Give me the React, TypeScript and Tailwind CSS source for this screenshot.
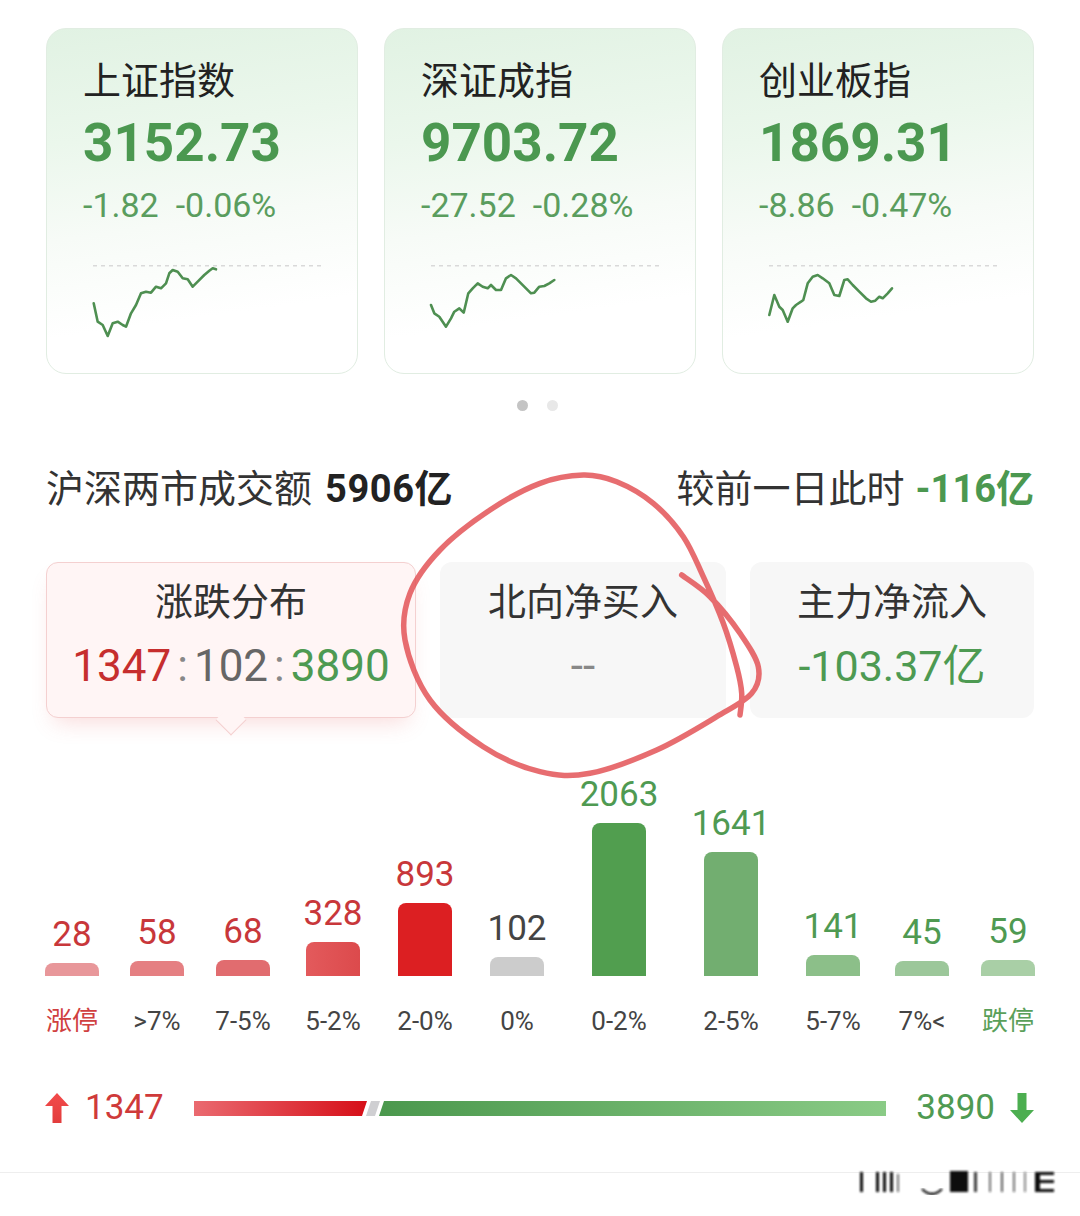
import React from "react";

type Pt = [number, number];

function polyPath(pts: Pt[]) {
  return pts.map((p, i) => `${i ? "L" : "M"}${p[0]},${p[1]}`).join(" ");
}

function smoothPath(pts: Pt[]) {
  let d = `M${pts[0][0]},${pts[0][1]}`;
  for (let i = 0; i < pts.length - 1; i++) {
    const p0 = pts[i - 1] || pts[i];
    const p1 = pts[i];
    const p2 = pts[i + 1];
    const p3 = pts[i + 2] || p2;
    const c1x = p1[0] + (p2[0] - p0[0]) / 6;
    const c1y = p1[1] + (p2[1] - p0[1]) / 6;
    const c2x = p2[0] - (p3[0] - p1[0]) / 6;
    const c2y = p2[1] - (p3[1] - p1[1]) / 6;
    d += ` C${c1x.toFixed(1)},${c1y.toFixed(1)} ${c2x.toFixed(1)},${c2y.toFixed(1)} ${p2[0]},${p2[1]}`;
  }
  return d;
}

const indices: { name: string; value: string; chg: string; pct: string; line: Pt[] }[] = [
  {
    name: "上证指数",
    value: "3152.73",
    chg: "-1.82",
    pct: "-0.06%",
    line: [
      [46.7, 274.3], [50.7, 292.7], [55.7, 296], [60.7, 307], [65.7, 294.3], [70.7, 292.7], [75.7, 296],
      [79, 297.7], [84, 284.3], [89, 276], [94, 264.3], [99, 262.7], [104, 263.7], [109, 257.7],
      [114, 259.3], [119, 254.3], [122.3, 244.3], [125.7, 241], [130.7, 242.7], [135.7, 249.3],
      [140.7, 250.3], [145.7, 257.7], [150.7, 252.7], [157.3, 246], [162.3, 241.7], [165.7, 239.3], [169, 240.3],
    ],
  },
  {
    name: "深证成指",
    value: "9703.72",
    chg: "-27.52",
    pct: "-0.28%",
    line: [
      [46, 276], [49.3, 284.3], [54.3, 287.7], [61, 297.7], [66, 289.3], [69.3, 282.7], [74.3, 279.3],
      [78.7, 283.7], [83.3, 264.3], [87.7, 259.3], [92.7, 254.3], [97.7, 257.7], [102.7, 259.3], [106, 256],
      [111, 261], [116, 261], [121, 249.3], [126, 246], [131, 249.3], [136, 254.3], [141, 259.3],
      [146, 264.3], [149.3, 263.7], [154.3, 257.7], [159.3, 257], [164.3, 254.3], [169.3, 251],
    ],
  },
  {
    name: "创业板指",
    value: "1869.31",
    chg: "-8.86",
    pct: "-0.47%",
    line: [
      [46.3, 286], [51.3, 266], [56.3, 277.7], [59.7, 281], [64.7, 292.7], [69.7, 279.3], [73, 276],
      [78, 272.7], [80.3, 271], [84.7, 254.3], [89.7, 247.7], [94.7, 246], [99.7, 249.3], [106.3, 254.3],
      [111.3, 266], [116.3, 267], [121.3, 251], [124.7, 250.3], [129.7, 256], [136.3, 262.7], [143, 269.3],
      [148, 272.7], [152.3, 271.7], [156.3, 267.7], [159.7, 269.3], [164.7, 264.3], [169, 259.3],
    ],
  },
];

const bars: { v: string; label: string; h: number; ml: string; bar: string; vc: string; lc: string }[] = [
  { v: "28", label: "涨停", h: 13, ml: "ml-0", bar: "bg-[#e8979a]", vc: "text-[#c8373a]", lc: "text-[#d04040]" },
  { v: "58", label: ">7%", h: 15, ml: "ml-[31px]", bar: "bg-[#e57f82]", vc: "text-[#c8373a]", lc: "text-[#444]" },
  { v: "68", label: "7-5%", h: 16, ml: "ml-[32px]", bar: "bg-[#e16c6f]", vc: "text-[#c8373a]", lc: "text-[#444]" },
  { v: "328", label: "5-2%", h: 34, ml: "ml-[36px]", bar: "bg-[linear-gradient(90deg,#e35a5c,#dc4a4c)]", vc: "text-[#c8373a]", lc: "text-[#444]" },
  { v: "893", label: "2-0%", h: 73, ml: "ml-[38px]", bar: "bg-[#dc1f22]", vc: "text-[#c8373a]", lc: "text-[#444]" },
  { v: "102", label: "0%", h: 19, ml: "ml-[38px]", bar: "bg-[#cccccc]", vc: "text-[#444]", lc: "text-[#444]" },
  { v: "2063", label: "0-2%", h: 153, ml: "ml-[48px]", bar: "bg-[#519e4f]", vc: "text-[#4f9a52]", lc: "text-[#444]" },
  { v: "1641", label: "2-5%", h: 124, ml: "ml-[58px]", bar: "bg-[#72ae70]", vc: "text-[#4f9a52]", lc: "text-[#444]" },
  { v: "141", label: "5-7%", h: 21, ml: "ml-[48px]", bar: "bg-[#8cbf89]", vc: "text-[#4f9a52]", lc: "text-[#444]" },
  { v: "45", label: "7%<", h: 15, ml: "ml-[35px]", bar: "bg-[#9cc79a]", vc: "text-[#4f9a52]", lc: "text-[#444]" },
  { v: "59", label: "跌停", h: 16, ml: "ml-[32px]", bar: "bg-[#a9cfa6]", vc: "text-[#4f9a52]", lc: "text-[#5aa05a]" },
];

const circle: Pt[] = [
  [681.7, 575], [710, 596.7], [740, 633.3], [758.3, 666.7], [751.7, 693.3], [716.7, 716.7], [656.7, 750],
  [590, 773.3], [540, 771.7], [483.3, 746.7], [430, 700], [405, 640], [410, 593.3], [440, 550], [490, 510],
  [540, 483.3], [583.3, 475], [616.7, 481.7], [653.3, 503.3], [683.3, 536.7], [703.3, 576.7], [723.3, 623.3],
  [736.7, 666.7], [741.7, 693.3], [740, 715],
];

function IndexCard({ d }: { d: (typeof indices)[number] }) {
  return (
    <div className="relative w-[312px] h-[346px] shrink-0 rounded-[20px] border border-[#e1ede2] bg-[linear-gradient(172deg,#e1f2e3_0%,#ebf7ec_30%,#f7fbf7_55%,#ffffff_80%)] overflow-hidden">
      <div className="ml-[36px] mt-[30px] text-[38px] leading-[44px] text-[#222]">{d.name}</div>
      <div className="ml-[36px] mt-[12px] text-[53px] leading-[56px] font-bold text-[#4b9850]">{d.value}</div>
      <div className="ml-[36px] mt-[14px] text-[34px] leading-[40px] text-[#5a9d5e] flex gap-[17px]">
        <span>{d.chg}</span>
        <span>{d.pct}</span>
      </div>
      <svg className="block" width="312" height="130" viewBox="0 196 312 130">
        <line x1="46" y1="236.7" x2="277" y2="236.7" stroke="#d9d9d9" strokeWidth="1.5" strokeDasharray="4 4" />
        <path d={polyPath(d.line)} fill="none" stroke="#4e8f51" strokeWidth="2.6" strokeLinejoin="round" strokeLinecap="round" />
      </svg>
    </div>
  );
}

export default function App() {
  return (
    <div className="relative w-[1080px] h-[1216px] bg-white overflow-hidden font-['Roboto','Noto_Sans_CJK_SC',sans-serif]">
      {/* index cards */}
      <div className="flex gap-[26px] pt-[28px] px-[46px]">
        {indices.map((d) => (
          <IndexCard key={d.name} d={d} />
        ))}
      </div>

      {/* pager dots */}
      <div className="flex justify-center gap-[19px] mt-[26px] pr-[6px]">
        <div className="w-[11px] h-[11px] rounded-full bg-[#c4c4c4]" />
        <div className="w-[11px] h-[11px] rounded-full bg-[#e8e8e8]" />
      </div>

      {/* turnover summary */}
      <div className="flex justify-between items-center px-[46px] mt-[56px] text-[38px] leading-[44px] text-[#333]">
        <div className="flex items-center">
          <span>沪深两市成交额</span>
          <span className="ml-[13px] font-bold text-[#222] tracking-[0.6px]">5906亿</span>
        </div>
        <div className="flex items-center">
          <span>较前一日此时</span>
          <span className="ml-[11px] font-bold text-[#4b9850]">-116亿</span>
        </div>
      </div>

      {/* stat tabs */}
      <div className="flex gap-[24px] px-[46px] mt-[51px]">
        <div className="relative w-[370px] h-[156px] shrink-0 rounded-[12px] border border-[#f4d0d0] bg-[#fff5f5] shadow-[0_12px_22px_-8px_rgba(230,90,90,0.22)]">
          <div className="absolute left-1/2 -bottom-[14px] w-[22px] h-[22px] -translate-x-1/2 rotate-45 bg-[#fff5f5] border-r border-b border-[#f4d0d0]" />
          <div className="relative flex flex-col items-center">
            <div className="mt-[17px] text-[38px] leading-[44px] text-[#333]">涨跌分布</div>
            <div className="mt-[17px] text-[44px] leading-[50px] flex items-center">
              <span className="text-[#c62e2e]">1347</span>
              <span className="text-[#888] mx-[6px]">:</span>
              <span className="text-[#666]">102</span>
              <span className="text-[#888] mx-[6px]">:</span>
              <span className="text-[#4d9a52]">3890</span>
            </div>
          </div>
        </div>
        <div className="w-[286px] h-[156px] shrink-0 rounded-[12px] bg-[#f7f7f7] flex flex-col items-center">
          <div className="mt-[18px] text-[38px] leading-[44px] text-[#333]">北向净买入</div>
          <div className="mt-[17px] text-[44px] leading-[50px] text-[#888]">--</div>
        </div>
        <div className="flex-1 h-[156px] rounded-[12px] bg-[#f7f7f7] flex flex-col items-center">
          <div className="mt-[18px] text-[38px] leading-[44px] text-[#333]">主力净流入</div>
          <div className="mt-[17px] text-[43px] leading-[50px] text-[#4d9a52]">-103.37亿</div>
        </div>
      </div>

      {/* distribution chart */}
      <div className="flex items-end px-[45px] mt-[57px]">
        {bars.map((b) => (
          <div key={b.label} className={`${b.ml} w-[54px] shrink-0 flex flex-col items-center`}>
            <div className={`${b.vc} text-[35px] leading-[40px] mb-[8px] whitespace-nowrap`}>{b.v}</div>
            <div className={`${b.bar} w-full rounded-t-[8px]`} style={{ height: b.h }} />
            <div className={`${b.lc} mt-[30px] text-[26px] leading-[30px] whitespace-nowrap`}>{b.label}</div>
          </div>
        ))}
      </div>

      {/* up / down ratio bar */}
      <div className="flex items-center mt-[52px] h-[40px]">
        <div className="w-[194px] shrink-0 flex items-center pl-[45px]">
          <svg width="24" height="30" viewBox="0 0 24 30">
            <defs>
              <linearGradient id="ua" x1="0" y1="0" x2="0" y2="1">
                <stop offset="0" stopColor="#f34b4b" />
                <stop offset="1" stopColor="#e23c3c" />
              </linearGradient>
            </defs>
            <polygon points="12,0 24,13 16.5,13 16.5,30 7.5,30 7.5,13 0,13" fill="url(#ua)" />
          </svg>
          <span className="ml-[16px] text-[35px] leading-[40px] text-[#cf3a3a]">1347</span>
        </div>
        <svg width="692" height="15" viewBox="0 0 692 15" className="shrink-0">
          <defs>
            <linearGradient id="rg" x1="0" y1="0" x2="1" y2="0">
              <stop offset="0" stopColor="#ea6a70" />
              <stop offset="1" stopColor="#d60f18" />
            </linearGradient>
            <linearGradient id="gg" x1="0" y1="0" x2="1" y2="0">
              <stop offset="0" stopColor="#4b984d" />
              <stop offset="1" stopColor="#8acb86" />
            </linearGradient>
          </defs>
          <polygon points="0,0 173,0 168,15 0,15" fill="url(#rg)" />
          <polygon points="177,0 186,0 181,15 172,15" fill="#cfcfd2" />
          <polygon points="190,0 692,0 692,15 185,15" fill="url(#gg)" />
        </svg>
        <div className="flex-1 flex items-center justify-end pr-[46px]">
          <span className="text-[35px] leading-[40px] text-[#4f9a52]">3890</span>
          <svg className="ml-[15px]" width="24" height="30" viewBox="0 0 24 30">
            <polygon points="7.5,0 16.5,0 16.5,17 24,17 12,30 0,17 7.5,17" fill="#4cae50" />
          </svg>
        </div>
      </div>

      {/* divider */}
      <div className="mt-[44px] border-t border-[#eeeeee]" />

      {/* watermark */}
      <svg className="absolute left-[858px] top-[1163px]" width="200" height="36" viewBox="0 0 200 36">
        <defs>
          <filter id="blur" x="-20%" y="-20%" width="140%" height="140%">
            <feGaussianBlur stdDeviation="1.2" />
          </filter>
        </defs>
        <g fill="#111" filter="url(#blur)">
          <rect x="2" y="9" width="3" height="20" />
          <rect x="18" y="9" width="3" height="20" />
          <rect x="25" y="9" width="3" height="20" />
          <rect x="32" y="9" width="3" height="20" />
          <rect x="39" y="11" width="2" height="18" opacity="0.6" />
          <rect x="92" y="8" width="18" height="21" />
          <rect x="116" y="9" width="3" height="20" opacity="0.8" />
          <rect x="131" y="9" width="2" height="20" opacity="0.6" />
          <rect x="143" y="9" width="2" height="20" opacity="0.7" />
          <rect x="155" y="9" width="2" height="20" opacity="0.6" />
          <rect x="166" y="9" width="2" height="20" opacity="0.5" />
          <rect x="177" y="9" width="19" height="3" />
          <rect x="177" y="17" width="19" height="3" />
          <rect x="177" y="26" width="19" height="3" />
          <rect x="177" y="9" width="5" height="20" />
        </g>
        <path d="M64,26 Q74,36 84,26" fill="none" stroke="#111" strokeWidth="2.2" filter="url(#blur)" />
      </svg>

      {/* hand-drawn annotation */}
      <svg className="absolute inset-0 pointer-events-none" width="1080" height="1216">
        <path d={smoothPath(circle)} fill="none" stroke="#e35457" strokeOpacity="0.85" strokeWidth="5.5" strokeLinecap="round" strokeLinejoin="round" />
      </svg>
    </div>
  );
}
